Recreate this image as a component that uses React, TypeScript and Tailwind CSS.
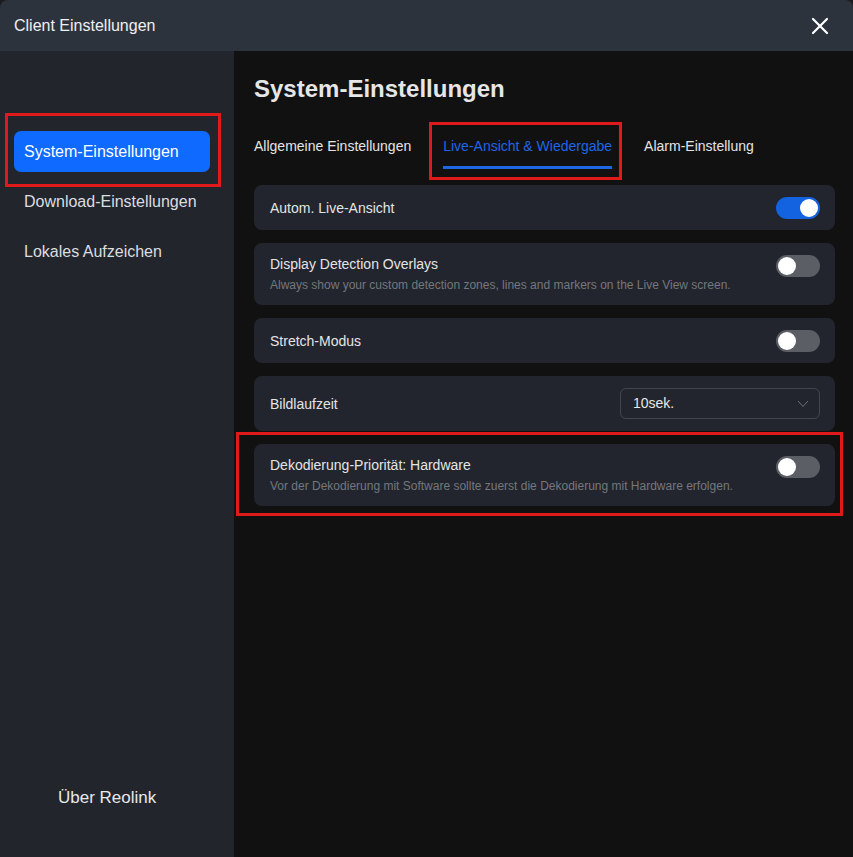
import React from "react";

function Toggle({ on, className = "" }: { on: boolean; className?: string }) {
  return (
    <div
      className={`relative h-[22px] w-[44px] shrink-0 rounded-full ${on ? "bg-[#1363e0]" : "bg-[#5b5e64]"} ${className}`}
    >
      <div
        className={`absolute top-[2px] h-[18px] w-[18px] rounded-full bg-white ${on ? "left-[24px]" : "left-[2px]"}`}
      />
    </div>
  );
}

function Card({ title, desc, on }: { title: string; desc?: string; on: boolean }) {
  return (
    <div
      className={`flex justify-between rounded-[8px] bg-[#22252d] pl-[16px] pr-[15px] ${desc ? "items-start pt-[11px] pb-[12px]" : "h-[45px] items-center"}`}
    >
      <div className="flex flex-col">
        <div className="text-[14px] leading-[20px] text-[#e4e4e6]">{title}</div>
        {desc && <div className="mt-[3px] text-[12px] leading-[16px] text-[#74777d]">{desc}</div>}
      </div>
      <Toggle on={on} className={desc ? "mt-[1px]" : ""} />
    </div>
  );
}

export default function App() {
  return (
    <div
      className="relative flex h-[857px] w-[853px] flex-col overflow-hidden bg-[#1a1c21]"
      style={{ fontFamily: '"Liberation Sans", Arial, sans-serif' }}
    >
      {/* Header */}
      <div className="flex h-[51px] shrink-0 items-center justify-between rounded-t-[8px] bg-[#2d333d] pl-[14px] pr-[24px]">
        <div className="text-[16px] text-[#eef0f3]">Client Einstellungen</div>
        <svg width="18" height="18" viewBox="0 0 18 18" fill="none">
          <path d="M2 2 L16 16 M16 2 L2 16" stroke="#ffffff" strokeWidth="2.2" strokeLinecap="round" />
        </svg>
      </div>

      <div className="flex flex-1">
        {/* Sidebar */}
        <div className="flex w-[234px] shrink-0 flex-col bg-[#22252c] pt-[80px] pl-[14px] pr-[24px] pb-[49px]">
          <div className="flex flex-col gap-[9px]">
            <div className="flex h-[41px] items-center rounded-[7px] bg-[#0f6aff] pl-[10px] text-[16px] text-white">
              System-Einstellungen
            </div>
            <div className="flex h-[41px] items-center pl-[10px] text-[16px] text-[#dcdde0]">Download-Einstellungen</div>
            <div className="flex h-[41px] items-center pl-[10px] text-[16px] text-[#dcdde0]">Lokales Aufzeichen</div>
          </div>
          <div className="mt-auto pl-[44px] text-[17px] leading-[20px] text-[#e8e9eb]">Über Reolink</div>
        </div>

        {/* Main */}
        <div className="flex flex-1 flex-col bg-[#111111] pl-[20px] pr-[18px] pt-[24px]">
          <div className="text-[24px] font-bold leading-[28px] text-[#e6e6e8]">System-Einstellungen</div>
          <div className="mt-[23px] flex gap-[32px] text-[14px] leading-[20px]">
            <div className="pt-[10px] pb-[13px] text-[#e4e4e6]">Allgemeine Einstellungen</div>
            <div className="flex flex-col pt-[10px]">
              <div className="text-[#1f66e5]">Live-Ansicht &amp; Wiedergabe</div>
              <div className="mt-[10px] h-[3px] bg-[#1f66e5]" />
            </div>
            <div className="pt-[10px] pb-[13px] text-[#e4e4e6]">Alarm-Einstellung</div>
          </div>

          <div className="mt-[16px] flex flex-col gap-[13px]">
            <Card title="Autom. Live-Ansicht" on />
            <Card
              title="Display Detection Overlays"
              desc="Always show your custom detection zones, lines and markers on the Live View screen."
              on={false}
            />
            <Card title="Stretch-Modus" on={false} />
            <div className="flex h-[55px] items-center justify-between rounded-[8px] bg-[#22252d] pl-[16px] pr-[15px]">
              <div className="text-[14px] leading-[20px] text-[#e4e4e6]">Bildlaufzeit</div>
              <div className="flex h-[31px] w-[200px] items-center justify-between rounded-[6px] border border-[#41454d] pl-[12px] pr-[10px]">
                <span className="text-[14px] text-[#e8e8ea]">10sek.</span>
                <svg width="12" height="8" viewBox="0 0 12 8" fill="none">
                  <path d="M1 1 L6 6.5 L11 1" stroke="#6b6e75" strokeWidth="1" />
                </svg>
              </div>
            </div>
            <Card
              title="Dekodierung-Priorität: Hardware"
              desc="Vor der Dekodierung mit Software sollte zuerst die Dekodierung mit Hardware erfolgen."
              on={false}
            />
          </div>
        </div>
      </div>

      {/* Annotation boxes */}
      <div className="pointer-events-none absolute left-[5px] top-[113px] h-[74px] w-[216px] border-[3px] border-[#e01a1a]" />
      <div className="pointer-events-none absolute left-[429px] top-[122px] h-[58px] w-[193px] border-[3px] border-[#e01a1a]" />
      <div className="pointer-events-none absolute left-[236px] top-[432px] h-[84px] w-[607px] border-[3px] border-[#e01a1a]" />
    </div>
  );
}
